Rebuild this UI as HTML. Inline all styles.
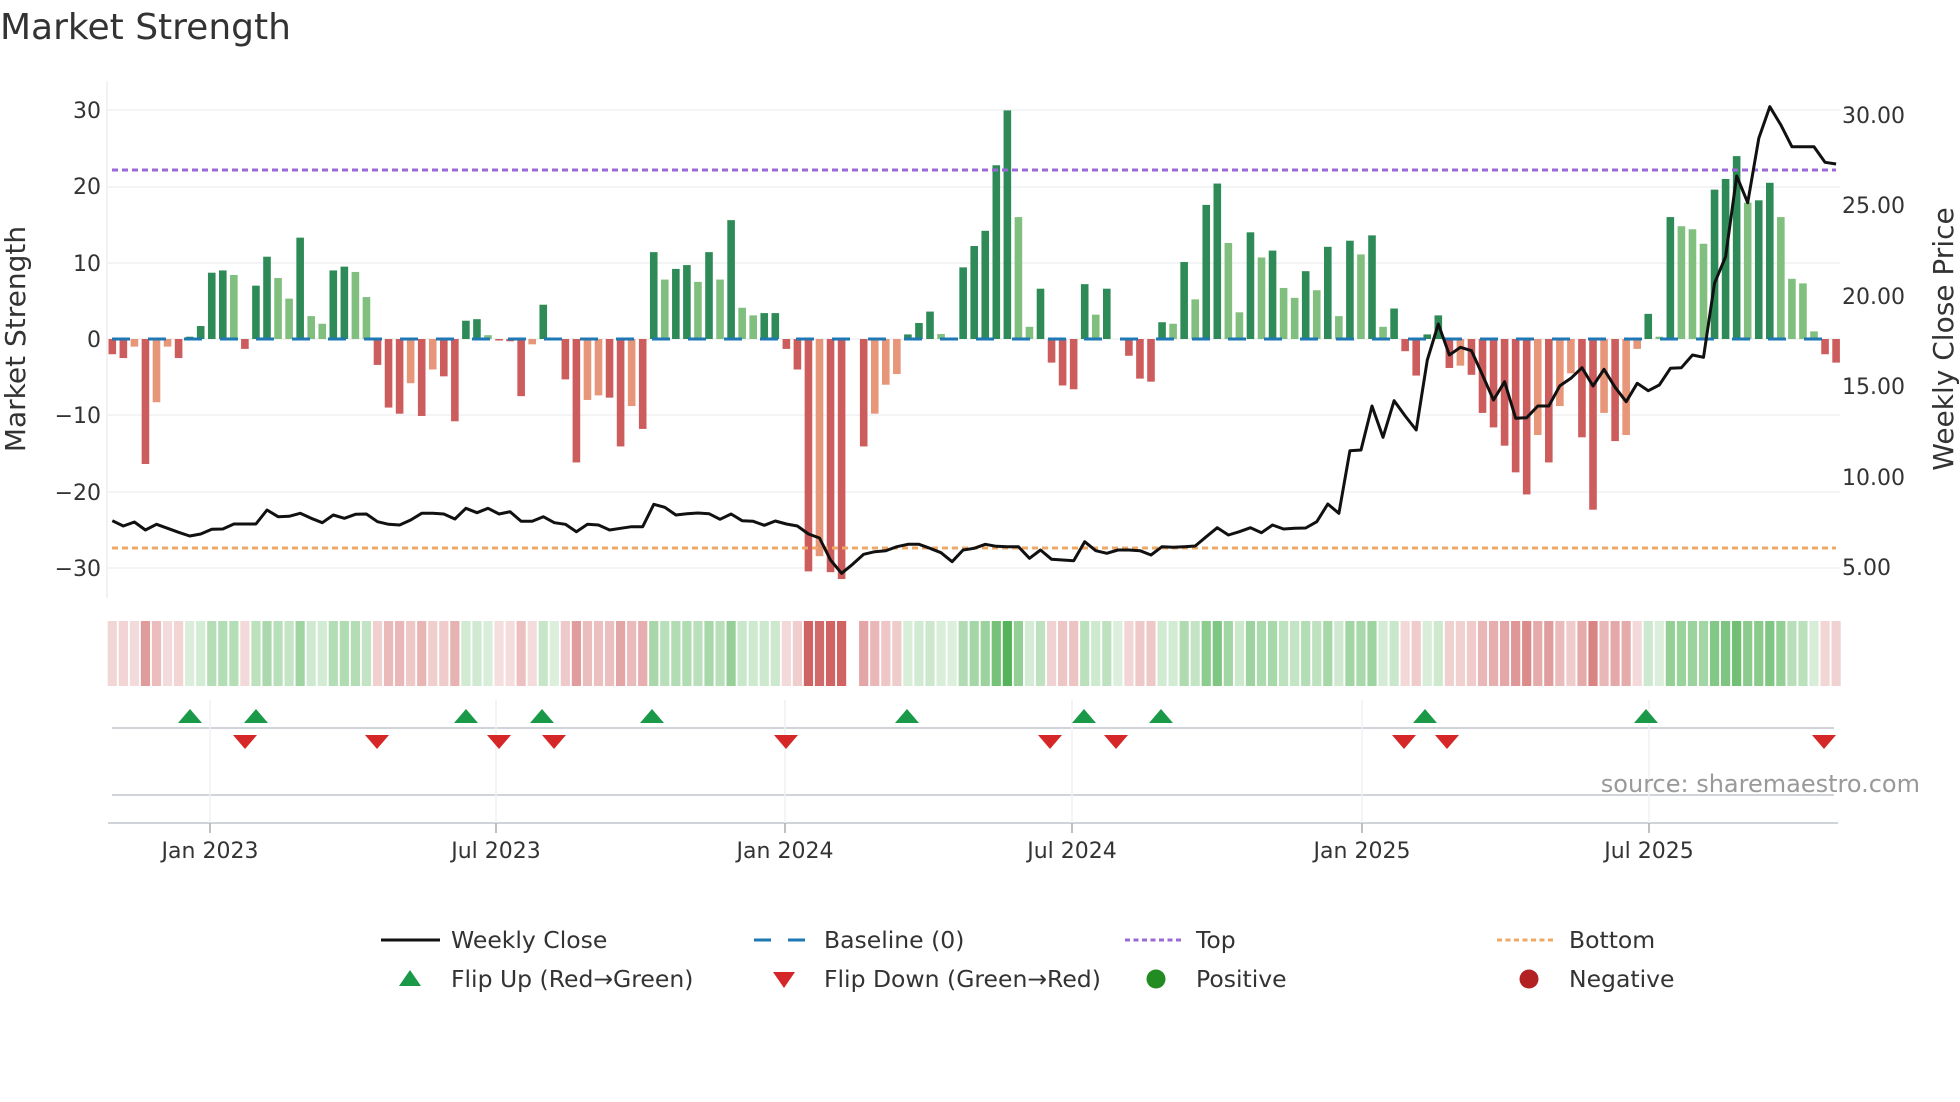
<!DOCTYPE html>
<html><head><meta charset="utf-8"><style>
html,body{margin:0;padding:0;background:#fff;}
svg{display:block;font-family:"DejaVu Sans","Liberation Sans",sans-serif;}
</style></head><body>
<svg id="s" width="1960" height="1102" viewBox="0 0 1960 1102" xmlns="http://www.w3.org/2000/svg">
<rect width="1960" height="1102" fill="#fff"/>
<text x="0" y="39" font-size="36" fill="#333">Market Strength</text>
<g id="grid"></g>
<line x1="107" y1="81" x2="107" y2="598" stroke="#eceef2" stroke-width="1.5"/>
<g font-size="22" fill="#333" text-anchor="end">
<text x="101" y="118">30</text><text x="101" y="194">20</text><text x="101" y="271">10</text>
<text x="101" y="347">0</text><text x="101" y="423">−10</text><text x="101" y="500">−20</text><text x="101" y="576">−30</text>
</g>
<g font-size="22" fill="#333">
<text x="1842" y="123">30.00</text><text x="1842" y="213">25.00</text><text x="1842" y="304">20.00</text>
<text x="1842" y="394">15.00</text><text x="1842" y="485">10.00</text><text x="1842" y="575">5.00</text>
</g>
<text transform="translate(25,339) rotate(-90)" font-size="28" fill="#333" text-anchor="middle">Market Strength</text>
<text transform="translate(1953,339) rotate(-90)" font-size="28" fill="#333" text-anchor="middle">Weekly Close Price</text>
<g id="bars"></g>
<line x1="108" y1="339" x2="1836" y2="339" stroke="#1f77b4" stroke-width="3" stroke-dasharray="18 18" stroke-dashoffset="-4"/>
<line x1="112" y1="170" x2="1836" y2="170" stroke="#9b68d6" stroke-width="3" stroke-dasharray="6 4"/>
<line x1="112" y1="548" x2="1836" y2="548" stroke="#efa865" stroke-width="3" stroke-dasharray="6 4"/>
<polyline id="price" fill="none" stroke="#111" stroke-width="3" stroke-linejoin="round"/>
<g id="strip"></g>
<line x1="112" y1="728" x2="1834" y2="728" stroke="#d0d3d8" stroke-width="2"/>
<line x1="112" y1="795" x2="1834" y2="795" stroke="#d0d3d8" stroke-width="2"/>
<line x1="108" y1="823" x2="1838" y2="823" stroke="#d0d3d8" stroke-width="2"/>
<g id="ticks"></g>
<g id="marks"></g>
<text x="1920" y="792" font-size="24" fill="#999" text-anchor="end">source: sharemaestro.com</text>
<g font-size="22" fill="#333" text-anchor="middle">
<text x="210" y="858">Jan 2023</text><text x="496" y="858">Jul 2023</text><text x="785" y="858">Jan 2024</text>
<text x="1072" y="858">Jul 2024</text><text x="1362" y="858">Jan 2025</text><text x="1649" y="858">Jul 2025</text>
</g>
<g font-size="23.5" fill="#333">
<line x1="381" y1="940" x2="440" y2="940" stroke="#111" stroke-width="3"/>
<text x="451" y="948">Weekly Close</text>
<line x1="754" y1="940" x2="806" y2="940" stroke="#1f77b4" stroke-width="3" stroke-dasharray="17 17"/>
<text x="824" y="948">Baseline (0)</text>
<line x1="1125" y1="940" x2="1181" y2="940" stroke="#9b68d6" stroke-width="3" stroke-dasharray="5 3.5"/>
<text x="1196" y="948">Top</text>
<line x1="1497" y1="940" x2="1554" y2="940" stroke="#efa865" stroke-width="3" stroke-dasharray="5 3.5"/>
<text x="1569" y="948">Bottom</text>
<polygon points="410,970 399,986 421,986" fill="#1a9a48"/>
<text x="451" y="987">Flip Up (Red→Green)</text>
<polygon points="773,972 795,972 784,988" fill="#d62728"/>
<text x="824" y="987">Flip Down (Green→Red)</text>
<circle cx="1156" cy="979" r="9.5" fill="#228b22"/>
<text x="1196" y="987">Positive</text>
<circle cx="1529" cy="979" r="9.5" fill="#b22222"/>
<text x="1569" y="987">Negative</text>
</g>
</svg>
<script>
(function(){
var NS="http://www.w3.org/2000/svg";
function el(p,t,a){var e=document.createElementNS(NS,t);for(var k in a)e.setAttribute(k,a[k]);p.appendChild(e);return e;}
var v=[-2,-2.5,-1,-16.4,-8.3,-1,-2.5,0.3,1.7,8.7,9,8.4,-1.3,7,10.8,8,5.3,13.3,3,2,9,9.5,8.8,5.5,-3.4,-9,-9.8,-5.8,-10.1,-4,-4.9,-10.8,2.4,2.6,0.5,-0.2,-0.3,-7.5,-0.7,4.5,0,-5.3,-16.2,-8,-7.4,-7.7,-14.1,-8.8,-11.8,11.4,7.8,9.2,9.7,7.5,11.4,7.8,15.6,4.1,3.1,3.4,3.4,-1.3,-4,-30.5,-28.5,-30.6,-31.5,0,-14.1,-9.8,-6,-4.6,0.6,2.1,3.6,0.65,0,9.4,12.2,14.2,22.8,30,16,1.6,6.6,-3.1,-6.1,-6.6,7.2,3.2,6.6,0,-2.2,-5.2,-5.6,2.2,2,10.1,5.2,17.6,20.4,12.6,3.5,14,10.7,11.6,6.7,5.4,8.9,6.4,12.1,3,12.9,11.1,13.6,1.6,4,-1.6,-4.8,0.6,3.1,-3.8,-3.5,-4.7,-9.7,-11.6,-14,-17.5,-20.4,-12.6,-16.2,-8.8,-4.5,-12.9,-22.4,-9.7,-13.4,-12.6,-1.3,3.3,0.3,16,14.8,14.4,12.5,19.6,21,24,17.9,18.2,20.5,16,7.9,7.3,1,-2,-3.1];
var pz=[1262,1278,1266,1290,1273,1285,1297,1308,1302,1288,1287,1272,1272,1272,1230,1250,1249,1240,1255,1268,1245,1255,1243,1242,1265,1273,1275,1260,1240,1240,1242,1257,1225,1238,1225,1242,1235,1264,1264,1250,1268,1273,1295,1273,1275,
1290,1285,1280,1280,1213,1222,1245,1241,1239,1241,1258,1242,1262,1264,1276,1263,1272,1278,1302,1314,1380,1420,1393,1363,1355,1352,1340,1333,1333,1345,1358,1385,1350,1345,1333,1339,1340,1340,1375,1350,1378,1380,1382,
1325,1352,1360,1350,1350,1352,1365,1340,1342,1340,1338,1310,1283,1305,1295,1283,1298,1275,1287,1285,1284,1265,1212,1240,1052,1050,918,1012,902,948,990,780,672,765,742,752,825,900,845,955,953,918,918,
857,835,803,858,808,862,905,850,872,855,805,803,765,772,550,470,228,308,115,20,75,140,140,140,187,192];
function X(i){return 112.3+11.05*i;}
var grid=document.getElementById('grid');
[110,187,263,339,415,492,568].forEach(function(y){el(grid,'line',{x1:108,y1:y,x2:1840,y2:y,stroke:'#eef0f3','stroke-width':1.5});});
var bars=document.getElementById('bars'),strip=document.getElementById('strip');
var lastSign=-1;
for(var i=0;i<v.length;i++){
  var val=v[i],prev=i>0?v[i-1]:0,x=X(i),c;
  if(val>0)c=(val>=prev)?'#2e8b57':'#80bf7e';
  else c=(val<=prev)?'#cd5c5c':'#e8967a';
  if(val!==0){var h=Math.abs(val)*7.62,y=val>0?339-h:339;el(bars,'rect',{x:x-3.8,y:y,width:7.6,height:Math.max(h,0.8),fill:c});}
  if(val>0)lastSign=1;else if(val<0)lastSign=-1;
  if(i!==67){var a=0.2+0.75*Math.min(Math.abs(val)/30,1);
    el(strip,'rect',{x:x-4.6,y:621,width:9.2,height:65,fill:lastSign>0?'#4caf50':'#cd5c5c','fill-opacity':a.toFixed(3)});}
}
var pts=[];for(var j=0;j<pz.length;j++)pts.push(X(j).toFixed(1)+','+(100+pz[j]/3).toFixed(1));
document.getElementById('price').setAttribute('points',pts.join(' '));
var tk=document.getElementById('ticks');
[210,496,785,1072,1362,1649].forEach(function(x){
  el(tk,'line',{x1:x,y1:700,x2:x,y2:823,stroke:'#eef0f3','stroke-width':1.5});
  el(tk,'line',{x1:x,y1:823,x2:x,y2:833,stroke:'#aaa','stroke-width':1.5});});
var mk=document.getElementById('marks');
[190,256,466,542,652,907,1084,1161,1425,1646].forEach(function(x){el(mk,'polygon',{points:(x)+',709 '+(x-12)+',723 '+(x+12)+',723',fill:'#1a9a48'});});
[245,377,499,554,786,1050,1116,1404,1447,1824].forEach(function(x){el(mk,'polygon',{points:(x-12)+',735 '+(x+12)+',735 '+x+',749',fill:'#d62728'});});
})();
</script>
</body></html>
